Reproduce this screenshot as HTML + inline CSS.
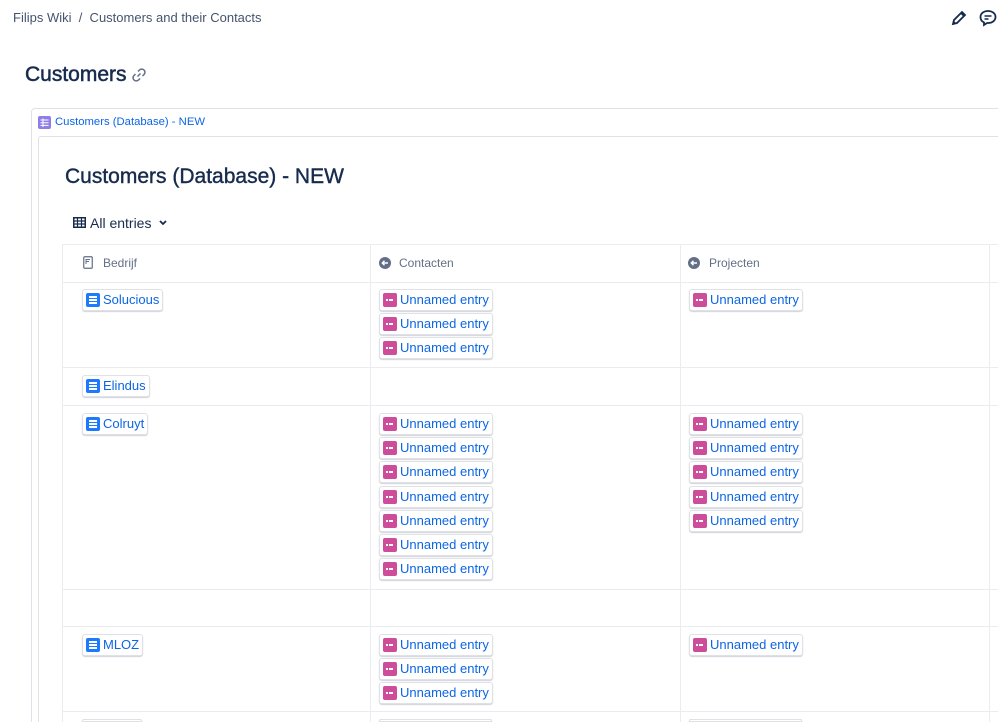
<!DOCTYPE html>
<html><head><meta charset="utf-8"><style>
*{margin:0;padding:0;box-sizing:border-box}
html,body{width:998px;height:722px;overflow:hidden}
body{background:#fff;font-family:"Liberation Sans",sans-serif;color:#172b4d}
#w{position:relative;width:998px;height:722px;overflow:hidden}
.a{position:absolute}
.chip{position:absolute;height:22px;border:1px solid #dfe1e6;border-radius:3px;box-shadow:0 1px 1px rgba(9,30,66,.2);background:#fff;font-size:13px;color:#0c66e4;line-height:20px;padding-left:20px;padding-right:3px;white-space:nowrap}
.chip i{position:absolute;left:3px;top:3px;width:14px;height:14px;border-radius:2px}
.p i{background:#cd4d9b}
.p i:after{content:"";position:absolute;left:3px;top:6px;width:2px;height:2px;background:#fff;box-shadow:3px 0 0 #fff,5px 0 0 #fff}
.d i{background:#1d7afc}
.d i:after{content:"";position:absolute;left:3px;top:3px;width:8px;height:1.5px;background:#fff;box-shadow:0 3px 0 #fff,0 6px 0 #fff}
.h{position:absolute;background:#ebecf0;height:1px}
.v{position:absolute;background:#ebecf0;width:1px}
.hd{position:absolute;top:256px;font-size:12px;color:#626f86}
</style></head><body><div id="w">
<div class="a" style="left:13px;top:10px;font-size:13px;color:#44546f">Filips Wiki&nbsp; / &nbsp;Customers and their Contacts</div>
<svg class="a" style="left:950px;top:9px" width="18" height="18" viewBox="0 0 18 18"><path d="M3 15l1-4 8-8 3 3-8 8z M11 4l3 3" fill="none" stroke="#172b4d" stroke-width="1.8"/><path d="M3 15l1-3 2 2z" fill="#172b4d"/></svg>
<svg class="a" style="left:978px;top:8px" width="20" height="20" viewBox="0 0 20 20"><path d="M10 3c4.4 0 7.5 2.6 7.5 6s-3.1 6-7.5 6l-1 0-3 2 0-2.6C3.5 13.3 2.5 11.3 2.5 9 2.5 5.6 5.6 3 10 3z" fill="none" stroke="#172b4d" stroke-width="1.8"/><path d="M6.5 8h7M6.5 11h4" stroke="#172b4d" stroke-width="1.6"/></svg>
<div class="a" style="left:25px;top:63px;font-size:21px;-webkit-text-stroke:0.5px #172b4d;color:#172b4d">Customers</div>
<svg class="a" style="left:130px;top:66px" width="18" height="18" viewBox="0 0 18 18"><path d="M7.5 10.5l3-3M8 5.5l1.5-1.5a3 3 0 0 1 4.5 4.5L12.5 10M10 12.5L8.5 14a3 3 0 0 1-4.5-4.5L5.5 8" fill="none" stroke="#626f86" stroke-width="1.5"/></svg>
<div class="a" style="left:31px;top:108px;width:980px;height:620px;border:1px solid #dfe1e6;border-radius:4px"></div>
<svg class="a" style="left:38px;top:116px" width="13" height="13" viewBox="0 0 13 13"><rect width="13" height="13" rx="2" fill="#8f7ee7"/><path d="M2.5 4h8M2.5 6.7h8M2.5 9.4h8M5 2.5v8.5" stroke="#fff" stroke-width="1"/></svg>
<div class="a" style="left:55px;top:116px;font-size:11.3px;color:#0c66e4">Customers (Database) - NEW</div>
<div class="a" style="left:38px;top:136px;width:980px;height:592px;border:1px solid #dfe1e6;border-radius:3px"></div>
<div class="a" style="left:65px;top:165px;font-size:21px;-webkit-text-stroke:0.4px #172b4d;color:#172b4d">Customers (Database) - NEW</div>
<svg class="a" style="left:73px;top:217px" width="13" height="11" viewBox="0 0 13 11"><rect x=".75" y=".75" width="11.5" height="9.5" fill="none" stroke="#172b4d" stroke-width="1.5"/><path d="M1 4h11M1 7h11M4.5 1v9M8.5 1v9" stroke="#172b4d" stroke-width="1.2"/></svg>
<div class="a" style="left:90px;top:215px;font-size:14px;color:#172b4d">All entries</div>
<svg class="a" style="left:158px;top:219px" width="10" height="8" viewBox="0 0 10 8"><path d="M2 2l3 3 3-3" fill="none" stroke="#172b4d" stroke-width="1.8"/></svg>
<div class="h" style="left:62px;top:244px;width:936px"></div>
<div class="h" style="left:62px;top:282px;width:936px"></div>
<div class="h" style="left:62px;top:367px;width:936px"></div>
<div class="h" style="left:62px;top:405px;width:936px"></div>
<div class="h" style="left:62px;top:589px;width:936px"></div>
<div class="h" style="left:62px;top:626px;width:936px"></div>
<div class="h" style="left:62px;top:711px;width:936px"></div>
<div class="v" style="left:62px;top:244px;height:478px"></div>
<div class="v" style="left:370px;top:244px;height:478px"></div>
<div class="v" style="left:680px;top:244px;height:478px"></div>
<div class="v" style="left:989px;top:244px;height:478px"></div>
<svg class="a" style="left:83px;top:256px" width="10" height="13" viewBox="0 0 10 13"><rect x=".75" y=".75" width="8.5" height="11.5" rx="1" fill="none" stroke="#626f86" stroke-width="1.2"/><path d="M3 3.5h4M3 5.5h3M3 3v5" stroke="#626f86" stroke-width="1"/></svg>
<div class="hd" style="left:103px">Bedrijf</div>
<svg class="a" style="left:379px;top:257px" width="12" height="12" viewBox="0 0 12 12"><circle cx="6" cy="6" r="6" fill="#626f86"/><path d="M9 6H3.5M5.5 3.8L3.3 6l2.2 2.2" fill="none" stroke="#fff" stroke-width="1.4"/></svg>
<div class="hd" style="left:399px">Contacten</div>
<svg class="a" style="left:688px;top:257px" width="12" height="12" viewBox="0 0 12 12"><circle cx="6" cy="6" r="6" fill="#626f86"/><path d="M9 6H3.5M5.5 3.8L3.3 6l2.2 2.2" fill="none" stroke="#fff" stroke-width="1.4"/></svg>
<div class="hd" style="left:709px">Projecten</div>

<div class="chip d" style="left:82px;top:289px"><i></i>Solucious</div>
<div class="chip d" style="left:82px;top:375px"><i></i>Elindus</div>
<div class="chip d" style="left:82px;top:413px"><i></i>Colruyt</div>
<div class="chip d" style="left:82px;top:634px"><i></i>MLOZ</div>
<div class="chip d" style="left:82px;top:719px;height:3px;width:60px"></div>

<div class="chip p" style="left:379px;top:289px"><i></i>Unnamed entry</div>
<div class="chip p" style="left:379px;top:313px"><i></i>Unnamed entry</div>
<div class="chip p" style="left:379px;top:337px"><i></i>Unnamed entry</div>
<div class="chip p" style="left:689px;top:289px"><i></i>Unnamed entry</div>

<div class="chip p" style="left:379px;top:413px"><i></i>Unnamed entry</div>
<div class="chip p" style="left:379px;top:437px"><i></i>Unnamed entry</div>
<div class="chip p" style="left:379px;top:461px"><i></i>Unnamed entry</div>
<div class="chip p" style="left:379px;top:486px"><i></i>Unnamed entry</div>
<div class="chip p" style="left:379px;top:510px"><i></i>Unnamed entry</div>
<div class="chip p" style="left:379px;top:534px"><i></i>Unnamed entry</div>
<div class="chip p" style="left:379px;top:558px"><i></i>Unnamed entry</div>
<div class="chip p" style="left:689px;top:413px"><i></i>Unnamed entry</div>
<div class="chip p" style="left:689px;top:437px"><i></i>Unnamed entry</div>
<div class="chip p" style="left:689px;top:461px"><i></i>Unnamed entry</div>
<div class="chip p" style="left:689px;top:486px"><i></i>Unnamed entry</div>
<div class="chip p" style="left:689px;top:510px"><i></i>Unnamed entry</div>

<div class="chip p" style="left:379px;top:634px"><i></i>Unnamed entry</div>
<div class="chip p" style="left:379px;top:658px"><i></i>Unnamed entry</div>
<div class="chip p" style="left:379px;top:682px"><i></i>Unnamed entry</div>
<div class="chip p" style="left:689px;top:634px"><i></i>Unnamed entry</div>
<div class="chip p" style="left:379px;top:719px;height:3px;width:113px"></div>
<div class="chip p" style="left:689px;top:719px;height:3px;width:113px"></div>
</div></body></html>
